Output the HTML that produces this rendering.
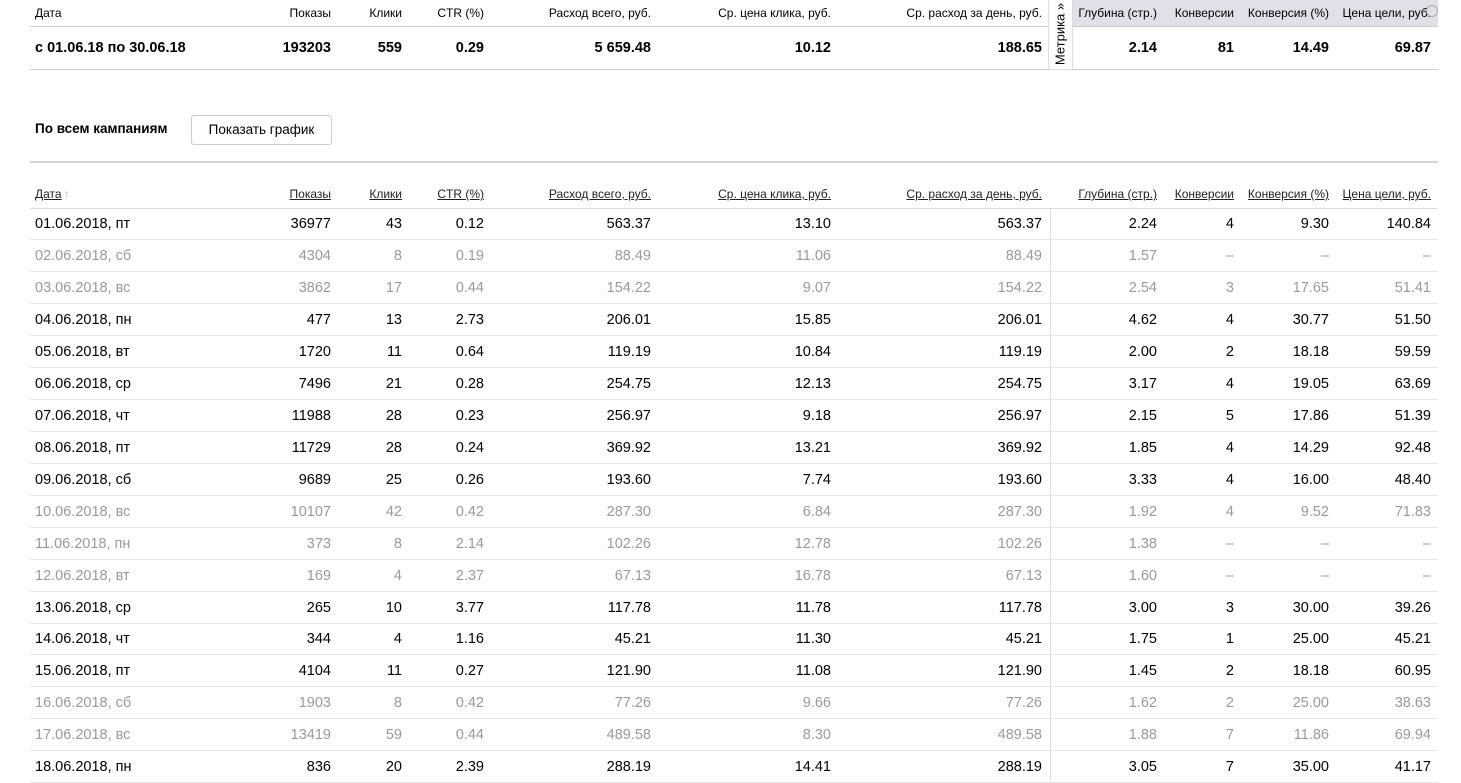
<!DOCTYPE html>
<html><head><meta charset="utf-8"><style>
body{margin:0;width:1461px;height:781px;overflow:hidden;background:#fff;font-family:"Liberation Sans","DejaVu Sans",sans-serif;color:#000;position:relative}
.r{position:absolute;left:30px;width:1408px;height:31px;border-bottom:1px solid #e6e6e6;font-size:14.5px}
.r span{position:absolute;top:50%;transform:translateY(-50%);white-space:nowrap}
.r span:nth-child(1){left:5px}
.r span:nth-child(2){right:1107px}
.r span:nth-child(3){right:1036px}
.r span:nth-child(4){right:954px}
.r span:nth-child(5){right:787px}
.r span:nth-child(6){right:607px}
.r span:nth-child(7){right:396px}
.r span:nth-child(8){right:281px}
.r span:nth-child(9){right:204px}
.r span:nth-child(10){right:109px}
.r span:nth-child(11){right:7px}
.g{color:#9a9a9a}
.h{font-size:12px}
.u span{text-decoration:underline;color:#222}
.b{font-weight:bold}
</style></head><body>
<div style="position:absolute;left:1072px;top:0;width:366px;height:27px;background:#e3dfe8"></div>
<div class="r h" style="top:0;height:26px;border-bottom:1px solid #ccc"><span>Дата</span><span>Показы</span><span>Клики</span><span>CTR (%)</span><span>Расход всего, руб.</span><span>Ср. цена клика, руб.</span><span>Ср. расход за день, руб.</span><span>Глубина (стр.)</span><span>Конверсии</span><span>Конверсия (%)</span><span>Цена цели, руб.</span></div>
<div style="position:absolute;left:1426px;top:5px;width:10px;height:10px;border:1px solid #aaa;border-radius:50%"></div>
<div class="r b" style="top:27px;height:42px;border-bottom:1px solid #ccc"><span>с 01.06.18 по 30.06.18</span><span>193203</span><span>559</span><span>0.29</span><span>5 659.48</span><span>10.12</span><span>188.65</span><span>2.14</span><span>81</span><span>14.49</span><span>69.87</span></div>
<div style="position:absolute;left:1048px;top:0;width:23px;height:69px;background:#fff;border:1px solid #ddd;border-top:none;border-radius:0 0 3px 3px"></div>
<div style="position:absolute;left:1060px;top:34px;transform:translate(-50%,-50%) rotate(-90deg);font-size:13px;white-space:nowrap">Метрика »</div>
<div style="position:absolute;left:35px;top:121px;font-size:13.5px;font-weight:bold">По всем кампаниям</div>
<div style="position:absolute;left:191px;top:115px;width:139px;height:28px;border:1px solid #ccc;border-radius:3px;font-size:13.5px;line-height:28px;text-align:center">Показать график</div>
<div style="position:absolute;left:30px;top:161px;width:1408px;height:2px;background:#d4d4d4"></div>
<div class="r h u" style="top:180px;height:28px;border-bottom:1px solid #ddd"><span>Дата<b style="font-weight:normal;color:#bbb;text-decoration:none;display:inline-block;margin-left:2px">↑</b></span><span>Показы</span><span>Клики</span><span>CTR (%)</span><span>Расход всего, руб.</span><span>Ср. цена клика, руб.</span><span>Ср. расход за день, руб.</span><span>Глубина (стр.)</span><span>Конверсии</span><span>Конверсия (%)</span><span>Цена цели, руб.</span></div>
<div style="position:absolute;left:1050px;top:209px;width:1px;height:572px;background:#ddd"></div>
<div class="r" style="top:208px"><span>01.06.2018, пт</span><span>36977</span><span>43</span><span>0.12</span><span>563.37</span><span>13.10</span><span>563.37</span><span>2.24</span><span>4</span><span>9.30</span><span>140.84</span></div>
<div class="r g" style="top:240px"><span>02.06.2018, сб</span><span>4304</span><span>8</span><span>0.19</span><span>88.49</span><span>11.06</span><span>88.49</span><span>1.57</span><span>–</span><span>–</span><span>–</span></div>
<div class="r g" style="top:272px"><span>03.06.2018, вс</span><span>3862</span><span>17</span><span>0.44</span><span>154.22</span><span>9.07</span><span>154.22</span><span>2.54</span><span>3</span><span>17.65</span><span>51.41</span></div>
<div class="r" style="top:304px"><span>04.06.2018, пн</span><span>477</span><span>13</span><span>2.73</span><span>206.01</span><span>15.85</span><span>206.01</span><span>4.62</span><span>4</span><span>30.77</span><span>51.50</span></div>
<div class="r" style="top:336px"><span>05.06.2018, вт</span><span>1720</span><span>11</span><span>0.64</span><span>119.19</span><span>10.84</span><span>119.19</span><span>2.00</span><span>2</span><span>18.18</span><span>59.59</span></div>
<div class="r" style="top:368px"><span>06.06.2018, ср</span><span>7496</span><span>21</span><span>0.28</span><span>254.75</span><span>12.13</span><span>254.75</span><span>3.17</span><span>4</span><span>19.05</span><span>63.69</span></div>
<div class="r" style="top:400px"><span>07.06.2018, чт</span><span>11988</span><span>28</span><span>0.23</span><span>256.97</span><span>9.18</span><span>256.97</span><span>2.15</span><span>5</span><span>17.86</span><span>51.39</span></div>
<div class="r" style="top:432px"><span>08.06.2018, пт</span><span>11729</span><span>28</span><span>0.24</span><span>369.92</span><span>13.21</span><span>369.92</span><span>1.85</span><span>4</span><span>14.29</span><span>92.48</span></div>
<div class="r" style="top:464px"><span>09.06.2018, сб</span><span>9689</span><span>25</span><span>0.26</span><span>193.60</span><span>7.74</span><span>193.60</span><span>3.33</span><span>4</span><span>16.00</span><span>48.40</span></div>
<div class="r g" style="top:496px"><span>10.06.2018, вс</span><span>10107</span><span>42</span><span>0.42</span><span>287.30</span><span>6.84</span><span>287.30</span><span>1.92</span><span>4</span><span>9.52</span><span>71.83</span></div>
<div class="r g" style="top:528px"><span>11.06.2018, пн</span><span>373</span><span>8</span><span>2.14</span><span>102.26</span><span>12.78</span><span>102.26</span><span>1.38</span><span>–</span><span>–</span><span>–</span></div>
<div class="r g" style="top:560px"><span>12.06.2018, вт</span><span>169</span><span>4</span><span>2.37</span><span>67.13</span><span>16.78</span><span>67.13</span><span>1.60</span><span>–</span><span>–</span><span>–</span></div>
<div class="r" style="top:592px"><span>13.06.2018, ср</span><span>265</span><span>10</span><span>3.77</span><span>117.78</span><span>11.78</span><span>117.78</span><span>3.00</span><span>3</span><span>30.00</span><span>39.26</span></div>
<div class="r" style="top:623px"><span>14.06.2018, чт</span><span>344</span><span>4</span><span>1.16</span><span>45.21</span><span>11.30</span><span>45.21</span><span>1.75</span><span>1</span><span>25.00</span><span>45.21</span></div>
<div class="r" style="top:655px"><span>15.06.2018, пт</span><span>4104</span><span>11</span><span>0.27</span><span>121.90</span><span>11.08</span><span>121.90</span><span>1.45</span><span>2</span><span>18.18</span><span>60.95</span></div>
<div class="r g" style="top:687px"><span>16.06.2018, сб</span><span>1903</span><span>8</span><span>0.42</span><span>77.26</span><span>9.66</span><span>77.26</span><span>1.62</span><span>2</span><span>25.00</span><span>38.63</span></div>
<div class="r g" style="top:719px"><span>17.06.2018, вс</span><span>13419</span><span>59</span><span>0.44</span><span>489.58</span><span>8.30</span><span>489.58</span><span>1.88</span><span>7</span><span>11.86</span><span>69.94</span></div>
<div class="r" style="top:751px"><span>18.06.2018, пн</span><span>836</span><span>20</span><span>2.39</span><span>288.19</span><span>14.41</span><span>288.19</span><span>3.05</span><span>7</span><span>35.00</span><span>41.17</span></div>
</body></html>
